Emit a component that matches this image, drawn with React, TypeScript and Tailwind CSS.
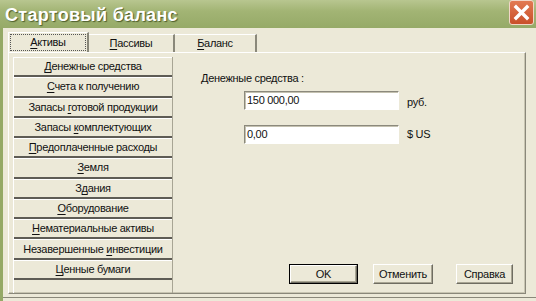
import React from "react";

const items: [string, string, string][] = [
  ["", "Д", "енежные средства"],
  ["", "С", "чета к получению"],
  ["Запасы ", "г", "отовой продукции"],
  ["Запасы ", "к", "омплектующих"],
  ["", "П", "редоплаченные расходы"],
  ["", "З", "емля"],
  ["З", "д", "ания"],
  ["", "О", "борудование"],
  ["", "Н", "ематериальные активы"],
  ["Незавершенные ", "и", "нвестиции"],
  ["", "Ц", "енные бумаги"],
];

function U({ children }: { children: React.ReactNode }) {
  return <span className="underline underline-offset-[2px]">{children}</span>;
}

function Btn({ label, def, w }: { label: string; def?: boolean; w: string }) {
  return (
    <div className={`${w} h-[20px] ${def ? "border border-black" : ""} flex`}>
      <div className="flex-1 flex items-center justify-center border-t border-l border-t-white border-l-white border-b border-r border-b-[#6f6d62] border-r-[#6f6d62] shadow-[inset_-1px_-1px_0_#a9a694] bg-[#ece9d8]">
        {label}
      </div>
    </div>
  );
}

export default function App() {
  return (
    <div
      className="w-[536px] h-[301px] bg-[#ece9d8] flex flex-col overflow-hidden text-[11px] leading-[13px] tracking-[-0.3px] text-[#111]"
      style={{ fontFamily: '"Liberation Sans", Arial, sans-serif' }}
    >
      {/* Title bar */}
      <div className="h-[28px] flex items-start bg-[linear-gradient(to_bottom,#b8c690,#a2b474_40%,#96aa68)]">
        <div className="pl-[5px] pt-[4px] text-[18px] leading-[22px] font-bold text-white [text-shadow:1px_1px_1px_#4d5e2c] tracking-[0.3px]">
          Стартовый баланс
        </div>
        <div className="flex-1" />
        <div className="w-[25px] h-[25px] mr-[2px] rounded-[3px] border border-[#f2d6c8] bg-[linear-gradient(to_bottom,#e27a52,#c9502a)] flex items-center justify-center">
          <svg width="17" height="17" viewBox="0 0 17 17">
            <path d="M3 3 L14 14 M14 3 L3 14" stroke="white" strokeWidth="3.4" strokeLinecap="square" />
          </svg>
        </div>
      </div>

      {/* Body */}
      <div className="flex-1 flex border-l-[3px] border-[#95a966]">
        <div className="flex-1 flex flex-col pl-[5px] pr-[10px] pt-[4px]">
          {/* Tabs */}
          <div className="h-[20px] flex items-end">
            <div className="w-[81px] h-[20px] border-t border-l border-white border-r-2 border-r-[#8a887a] flex items-center justify-center p-[1px]">
              <div className="w-full h-full border border-dotted border-[#555] flex items-center justify-center">
                <span>
                  <U>А</U>ктивы
                </span>
              </div>
            </div>
            <div className="w-[86px] h-[18px] border-t border-white border-r-2 border-r-[#8a887a] flex items-center justify-center">
              <span>
                <U>П</U>ассивы
              </span>
            </div>
            <div className="w-[82px] h-[18px] border-t border-white border-r-2 border-r-[#8a887a] flex items-center justify-center">
              <span>
                <U>Б</U>аланс
              </span>
            </div>
          </div>

          {/* Panel */}
          <div className="h-[242px] flex border-t border-l border-white border-r border-b border-r-[#8a887a] border-b-[#8a887a] shadow-[inset_-1px_-1px_0_#c8c5b2]">
            {/* List */}
            <div className="ml-[4px] mt-[4px] w-[160px] flex flex-col border-l border-white border-r border-r-[#a8a594]">
              <div className="h-[223px] grid grid-rows-[repeat(11,1fr)]">
                {items.map((it, i) => (
                  <div
                    key={i}
                    className="flex items-center justify-center border-t border-t-white border-b-2 border-b-[#5e5c55]"
                  >
                    <span>
                      {it[0]}
                      <U>{it[1]}</U>
                      {it[2]}
                    </span>
                  </div>
                ))}
              </div>
              <div className="flex-1" />
            </div>

            {/* Right content */}
            <div className="flex-1 flex flex-col">
              <div className="ml-[28px] mt-[19px]">Денежные средства :</div>
              <div className="flex items-center mt-[6px]">
                <div className="ml-[71px] w-[155px] h-[19px] bg-white border-t border-l border-[#8b897c] border-b border-r border-b-white border-r-white flex items-center pl-[2px] shadow-[inset_1px_1px_0_#c4c1b0]">
                  150 000,00
                </div>
                <div className="ml-[8px] pt-[3px]">руб.</div>
              </div>
              <div className="flex items-center mt-[15px]">
                <div className="ml-[71px] w-[155px] h-[19px] bg-white border-t border-l border-[#8b897c] border-b border-r border-b-white border-r-white flex items-center pl-[2px] shadow-[inset_1px_1px_0_#c4c1b0]">
                  0,00
                </div>
                <div className="ml-[8px]">$ US</div>
              </div>
              <div className="flex-1" />
              <div className="flex justify-end pr-[12px] pb-[9px]">
                <Btn label="OK" def w="w-[69px]" />
                <div className="w-[15px]" />
                <Btn label="Отменить" w="w-[60px]" />
                <div className="w-[23px]" />
                <Btn label="Справка" w="w-[57px]" />
              </div>
            </div>
          </div>
          <div className="h-[3px]" />
          <div className="h-[1px] bg-[#8a887a] -ml-[5px] -mr-[10px]" />
          <div className="flex-1" />
        </div>
      </div>
    </div>
  );
}
